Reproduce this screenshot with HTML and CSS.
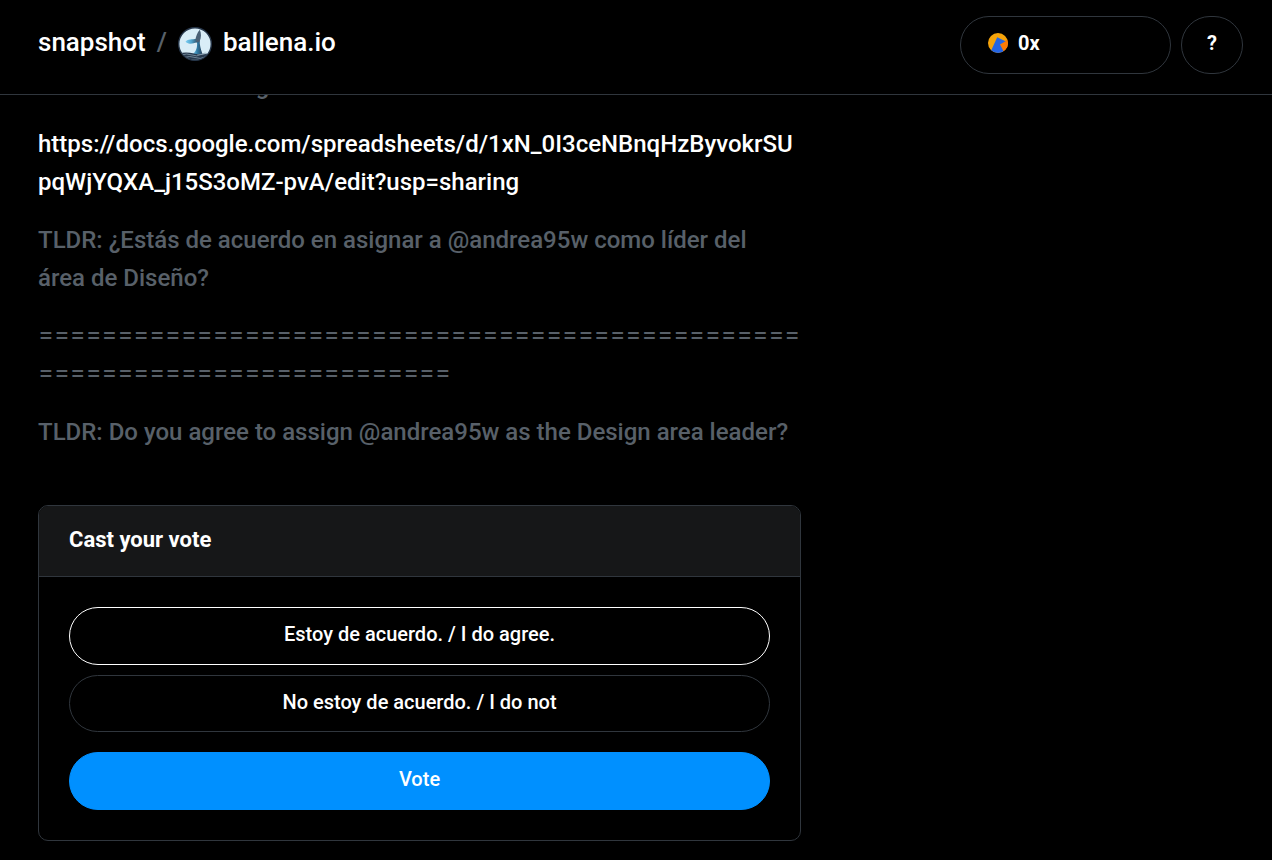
FILE: index.html
```html
<!DOCTYPE html>
<html lang="es">
<head>
<meta charset="utf-8">
<meta name="viewport" content="width=device-width, initial-scale=1">
<title>ballena.io</title>
<link rel="stylesheet" href="styles.css">
</head>
<body>
<header class="topbar">
  <nav class="brand">
    <a class="brand-link" href="#">snapshot</a>
    <span class="slash">/</span>
    <a class="brand-link space" href="#">
      <svg class="space-logo" viewBox="0 0 34 34" aria-hidden="true">
        <defs>
          <clipPath id="disc"><circle cx="17" cy="17" r="15.8"/></clipPath>
          <linearGradient id="fluke" x1="0" x2="1"><stop offset="0" stop-color="#7fd0f4"/><stop offset=".5" stop-color="#4fa3cc"/><stop offset="1" stop-color="#33566f"/></linearGradient>
          <linearGradient id="tail" x1="0" x2="1"><stop offset="0" stop-color="#74c6ea"/><stop offset=".45" stop-color="#2f7ba5"/><stop offset="1" stop-color="#2b4058"/></linearGradient>
        </defs>
        <circle cx="17" cy="17" r="16.300" fill="#d9edf7" stroke="#26364a" stroke-width="1.4"/>
        <g clip-path="url(#disc)">
          <path d="M18.500 12L21.800 13.500C21.400 18 22.800 22 24.500 27H15C18 24.500 19.600 20 19 15.500Z" fill="url(#tail)"/>
          <path d="M7.500 14.500C10 12 14 12.300 18.500 12L19.200 15.500C16 15.600 14.500 17 12 16.800C10 16.700 8.500 15.800 7.500 14.500Z" fill="url(#fluke)"/>
          <path d="M17.500 12C18.300 9 19 6 21.800 2.800C23.400 6.500 23.400 10.500 21.600 14.500L19.200 15.500Z" fill="#4a6075"/>
          <path d="M0 26.500Q8 24.500 16 26.500T34 26V34H0Z" fill="#27394e"/>
          <path d="M3 28Q9 26 14 28T23 27.500T31 27M6 30.500Q12 28.500 17 30.500T28 30" fill="none" stroke="#8298a8" stroke-width=".8"/>
        </g>
      </svg>
      ballena.io
    </a>
  </nav>
  <div class="actions">
    <button class="pill account" type="button">
      <svg class="avatar" viewBox="0 0 20 20" aria-hidden="true">
        <defs><clipPath id="face"><circle cx="10" cy="10" r="10"/></clipPath></defs>
        <g clip-path="url(#face)">
          <path d="M0 0H20V20H0Z" fill="#f5a30a"/>
          <path d="M11 12L20 6V20H14Z" fill="#fb7a05"/>
          <path d="M9.200 4.300L17.500 8.300L12 11.500L16.500 20H2Z" fill="#2465e4"/>
        </g>
      </svg>
      0x
    </button>
    <button class="pill help" type="button" aria-label="Help">?</button>
  </div>
</header>
<main class="page">
  <article class="proposal">
    <p>Documentos en Google</p>
    <p><a class="doc-link" href="#">https://docs.google.com/spreadsheets/d/1xN_0I3ceNBnqHzByvokrSUpqWjYQXA_j15S3oMZ-pvA/edit?usp=sharing</a></p>
    <p>TLDR: ¿Estás de acuerdo en asignar a @andrea95w como líder del área&nbsp;de Diseño?</p>
    <p class="divider">==========================================================================</p>
    <p>TLDR: Do you agree to assign @andrea95w as the Design area leader?</p>
  </article>
  <section class="card">
    <h4 class="card-title">Cast your vote</h4>
    <div class="card-body">
      <button class="pill choice selected" type="button">Estoy de acuerdo. / I do agree.</button>
      <button class="pill choice" type="button">No estoy de acuerdo. / I do not</button>
      <button class="pill submit" type="button">Vote</button>
    </div>
  </section>
</main>
</body>
</html>
```
FILE: styles.css
```css
* { box-sizing: border-box; }

body {
  margin: 0;
  background: #000;
  color: #586069;
  font-family: Roboto, "Liberation Sans", sans-serif;
  font-size: 24px;
  font-weight: 500;
  line-height: 38px;
}

a { color: #fff; text-decoration: none; }

.topbar {
  position: relative;
  z-index: 1;
  display: flex;
  align-items: center;
  justify-content: space-between;
  padding: 16px 29px 20px 38px;
  background: #000;
  border-bottom: 1px solid #30363d;
}

.brand {
  display: flex;
  align-items: center;
  gap: 11px;
  font-size: 26px;
  padding-bottom: 6px;
}

.space { display: flex; align-items: center; gap: 11px; }
.space-logo { width: 34px; height: 34px; margin-top: 4px; }

.actions { display: flex; gap: 10px; }

.pill {
  height: 58px;
  padding: 0 27px 4px;
  border: 1px solid #30363d;
  border-radius: 29px;
  background: transparent;
  color: #fff;
  font-family: inherit;
  font-size: 20px;
  font-weight: 500;
}

.account {
  display: flex;
  align-items: center;
  gap: 10px;
  min-width: 211px;
  font-weight: 700;
}

.avatar { width: 20px; height: 20px; }
.help { min-width: 62px; padding: 0 0 4px; font-weight: 700; }

.page {
  max-width: 839px;
  margin-top: -28px;
  padding: 0 38px 20px;
}

.proposal p { margin: 0 0 20px; overflow-wrap: anywhere; }
.proposal .divider { margin: -2px 0 22px; font-family: Inter, sans-serif; font-weight: 400; }

.card {
  margin-top: 54px;
  border: 1px solid #30363d;
  border-radius: 10px;
  overflow: hidden;
}

.card-title {
  margin: 0;
  padding: 15px 30px 17px;
  border-bottom: 1px solid #30363d;
  background: #161718;
  color: #fff;
  font-size: 22px;
  font-weight: 700;
}

.card-body {
  display: flex;
  flex-direction: column;
  gap: 10px;
  padding: 30px;
}

.choice + .choice { height: 57px; }
.selected { border-color: #fff; }

.submit {
  margin-top: 10px;
  border-color: #0090ff;
  background: #0090ff;
}
```
